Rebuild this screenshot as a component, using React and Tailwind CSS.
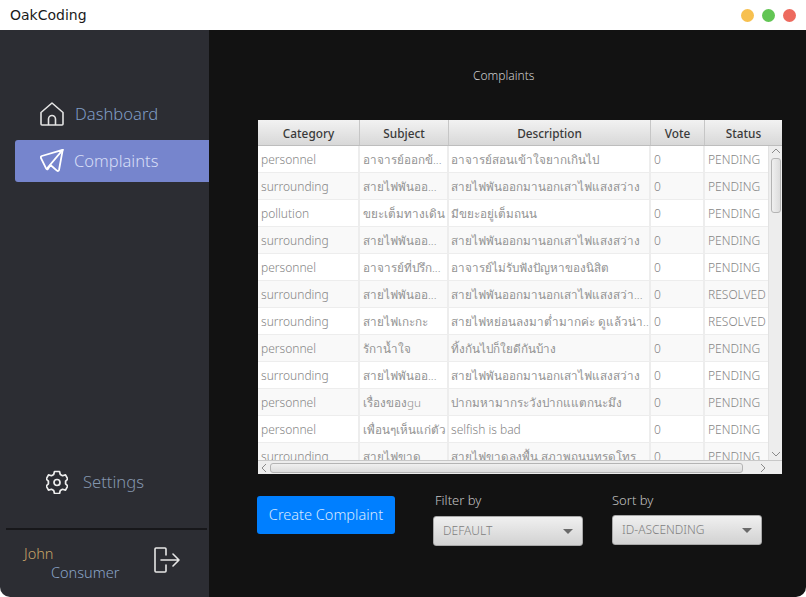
const rows = [
  ["personnel", "อาจารย์ออกข้...", "อาจารย์สอนเข้าใจยากเกินไป", "PENDING"],
  ["surrounding", "สายไฟพันออ...", "สายไฟพันออกมานอกเสาไฟแสงสว่าง", "PENDING"],
  ["pollution", "ขยะเต็มทางเดิน", "มีขยะอยู่เต็มถนน", "PENDING"],
  ["surrounding", "สายไฟพันออ...", "สายไฟพันออกมานอกเสาไฟแสงสว่าง", "PENDING"],
  ["personnel", "อาจารย์ที่ปรึก...", "อาจารย์ไม่รับฟังปัญหาของนิสิต", "PENDING"],
  ["surrounding", "สายไฟพันออ...", "สายไฟพันออกมานอกเสาไฟแสงสว่า...", "RESOLVED"],
  ["surrounding", "สายไฟเกะกะ", "สายไฟหย่อนลงมาต่ำมากค่ะ ดูแล้วน่า...", "RESOLVED"],
  ["personnel", "รักาน้ำใจ", "ทิ้งกันไปก็ใยดีกันบ้าง", "PENDING"],
  ["surrounding", "สายไฟพันออ...", "สายไฟพันออกมานอกเสาไฟแสงสว่าง", "PENDING"],
  ["personnel", "เรื่องของgu", "ปากมหามากระวังปากแแตกนะมึง", "PENDING"],
  ["personnel", "เพื่อนๆเห็นแก่ตัว", "selfish is bad", "PENDING"],
  ["surrounding", "สายไฟขาด", "สายไฟขาดลงพื้น สภาพถนนทรุดโทร", "PENDING"],
];

const headers = [
  ["Category", "w-[102px]"],
  ["Subject", "w-[89px]"],
  ["Description", "w-[202px]"],
  ["Vote", "w-[54px]"],
  ["Status", "w-[77px]"],
];

// the fallback Thai face runs wider than latin, so it gets a smaller size
const textCls = (t) => (/[\u0E00-\u0E7F]/.test(t) ? "text-[11.7px] text-[#929292]" : "text-[12px] text-[#858585]");

const HomeIcon = () => (
  <svg width="24" height="24" viewBox="0 0 24 24" fill="none" stroke="#e4e4e4" strokeWidth="1.6" strokeLinejoin="round">
    <path d="M1 10.5 12 1l11 9.5V22a1 1 0 0 1-1 1H2a1 1 0 0 1-1-1z" />
    <path d="M8.5 23v-6a3.5 3.5 0 0 1 7 0v6" />
  </svg>
);

const PlaneIcon = () => (
  <svg width="24" height="24" viewBox="0 0 24 24" fill="none" stroke="#fff" strokeWidth="1.8" strokeLinejoin="round" strokeLinecap="round">
    <path d="M22.7.8 1.8 7Q.4 7.6 1 9.2L6.2 19.6Q7 21 8 19.8L10.5 16l6.4 5.6Q18.4 22.6 19 21z" />
    <path d="M22.7.8 7 19.5" />
  </svg>
);

const GearIcon = () => (
  <svg width="22" height="24" viewBox="0 0 22 24" fill="none" stroke="#eee" strokeWidth="1.7" strokeLinejoin="round">
    <path d="M8.5 1.5h5l.8 3 2.2 1.2 3-.8 2.3 4.2-2.2 2.1v2.6l2.2 2.1-2.3 4.2-3-.8-2.2 1.2-.8 3h-5l-.8-3-2.2-1.2-3 .8L.2 15.9l2.2-2.1v-2.6L.2 9.1l2.3-4.2 3 .8 2.2-1.2z" />
    <circle cx="11" cy="12.5" r="3" />
  </svg>
);

const LogoutIcon = () => (
  <svg className="-mt-[6px]" width="26" height="26" viewBox="0 0 26 26" fill="none" stroke="#e6e6e6" strokeWidth="1.6" strokeLinecap="round" strokeLinejoin="round">
    <path d="M12 8V2a1 1 0 0 0-1-1H2a1 1 0 0 0-1 1v22a1 1 0 0 0 1 1h9a1 1 0 0 0 1-1v-6" />
    <path d="M7 13h18M19 7l6 6-6 6" />
  </svg>
);

const SelectBox = ({ label, value, className, labelCls, boxCls }) => (
  <div className={`flex flex-col w-[150px] ${className}`}>
    <span className={`text-[13px] leading-[18px] text-[#c4c4c4] ${labelCls}`}>{label}</span>
    <div className={`h-[30px] flex items-center justify-between pl-[9px] pr-[9px] rounded-[3px] border border-[#a8a8a8] bg-gradient-to-b from-[#f0f0f0] to-[#d2d2d2] text-[12px] text-[#808080] ${boxCls}`}>
      <span>{value}</span>
      <span className="w-0 h-0 border-x-[5px] border-x-transparent border-t-[5px] border-t-[#6a6a6a]" />
    </div>
  </div>
);

export default function App() {
  return (
    <div className="w-[806px] h-[597px] flex flex-col bg-white overflow-hidden font-['Noto_Sans',sans-serif] font-light">
      {/* Title bar */}
      <div className="h-[30px] shrink-0 flex items-center justify-between pl-[10px] pr-[10px] bg-white">
        <span className="font-['DejaVu_Sans',sans-serif] font-normal text-[14px] text-[#1a1a1a]">OakCoding</span>
        <div className="flex items-center gap-[8px]">
          <span className="w-[13px] h-[13px] rounded-full bg-[#f7c04f]" />
          <span className="w-[13px] h-[13px] rounded-full bg-[#62c554]" />
          <span className="w-[13px] h-[13px] rounded-full bg-[#ed6a5e]" />
        </div>
      </div>

      <div className="flex-1 flex min-h-0 rounded-b-[10px] overflow-hidden">
        {/* Sidebar */}
        <div className="w-[209px] shrink-0 bg-[#2c2d33] flex flex-col pt-[64px]">
          <div className="h-[40px] flex items-center pl-[40px] gap-[11px] text-[16.6px] text-[#7f9cc4]">
            <HomeIcon />
            <span>Dashboard</span>
          </div>
          <div className="mt-[6px] ml-[15px] h-[42px] flex items-center pl-[25px] gap-[10px] rounded-l-[3px] bg-[#7685cd] text-[16.5px] text-[#d6def6]">
            <PlaneIcon />
            <span>Complaints</span>
          </div>
          <div className="mt-auto h-[40px] flex items-center pl-[46px] gap-[15px] text-[16.6px] text-[#8496ae]">
            <GearIcon />
            <span>Settings</span>
          </div>
          <div className="mt-[26px] ml-[6px] mr-[2px] border-t-2 border-[#17171a]" />
          <div className="h-[67px] flex items-center pl-[24px] pb-[2px]">
            <div className="w-[130px] text-[14.5px] leading-[19px]">
              <div className="text-[#c7a468]">John</div>
              <div className="pl-[27px] text-[#8aa4c8]">Consumer</div>
            </div>
            <LogoutIcon />
          </div>
        </div>

        {/* Main */}
        <div className="flex-1 bg-[#121212] flex flex-col pl-[49px] pr-[24px]">
          <div className="h-[90px] pt-[36px] pl-[215px] text-[12px] leading-[20px] text-[#cfcfcf]">Complaints</div>

          {/* Table */}
          <div className="w-[524px] h-[354px] bg-[#f4f4f4] flex flex-col overflow-hidden">
            <div className="h-[26px] shrink-0 flex border-b border-[#bdbdbd] bg-gradient-to-b from-[#f2f2f2] to-[#d8d8d8]">
              {headers.map(([h, w]) => (
                <div key={h} className={`${w} shrink-0 flex items-center justify-center pt-[3px] border-r border-[#c6c6c6] last:border-r-0 font-medium text-[#3a3a3a] text-[11.8px]`}>
                  {h}
                </div>
              ))}
            </div>
            <div className="flex-1 min-h-0 flex">
              <div className="w-[510px] overflow-hidden">
                {rows.map((r, i) => (
                  <div key={i} className={`h-[27px] flex items-center border-b border-[#ededed] ${i % 2 ? "bg-[#f9f9f9]" : "bg-white"}`}>
                    <div className={`w-[102px] shrink-0 pl-[3px] pt-px border-r-2 border-[#ededed] h-full flex items-center whitespace-nowrap overflow-hidden ${textCls(r[0])}`}>{r[0]}</div>
                    <div className={`w-[89px] shrink-0 pl-[3px] pt-px border-r-2 border-[#ededed] h-full flex items-center whitespace-nowrap overflow-hidden ${textCls(r[1])}`}>{r[1]}</div>
                    <div className={`w-[202px] shrink-0 pl-[2px] pt-px border-r-2 border-[#ededed] h-full flex items-center whitespace-nowrap overflow-hidden ${textCls(r[2])}`}>{r[2]}</div>
                    <div className="w-[54px] shrink-0 pl-[3px] pt-px border-r-2 border-[#ededed] h-full flex items-center text-[12px] text-[#858585]">0</div>
                    <div className="w-[63px] shrink-0 pl-[3px] pt-px h-full flex items-center whitespace-nowrap overflow-hidden text-[12px] text-[#858585]">{r[3]}</div>
                  </div>
                ))}
              </div>
              {/* Vertical scrollbar */}
              <div className="w-[14px] shrink-0 flex flex-col items-center bg-[#ededed] border-l border-[#e2e2e2]">
                <svg width="10" height="12" viewBox="0 0 10 12" fill="none" stroke="#8a8a8a" strokeWidth="1"><path d="M1 7l4-4 4 4" /></svg>
                <div className="w-[10px] h-[55px] rounded-[3px] border border-[#b4b4b4] bg-gradient-to-r from-[#f0f0f0] to-[#dcdcdc]" />
                <div className="flex-1" />
                <svg width="10" height="12" viewBox="0 0 10 12" fill="none" stroke="#8a8a8a" strokeWidth="1"><path d="M1 4l4 4 4-4" /></svg>
              </div>
            </div>
            {/* Horizontal scrollbar */}
            <div className="h-[14px] shrink-0 flex items-center bg-[#ededed] border-t border-[#c8c8c8]">
              <svg width="12" height="10" viewBox="0 0 12 10" fill="none" stroke="#8a8a8a" strokeWidth="1"><path d="M8 1 4 5l4 4" /></svg>
              <div className="w-[473px] h-[10px] rounded-[3px] border border-[#b4b4b4] bg-gradient-to-b from-[#f0f0f0] to-[#dcdcdc]" />
              <svg className="ml-[14px]" width="12" height="10" viewBox="0 0 12 10" fill="none" stroke="#8a8a8a" strokeWidth="1"><path d="M4 1l4 4-4 4" /></svg>
            </div>
          </div>

          {/* Bottom controls */}
          <div className="flex items-start mt-[17px]">
            <button className="mt-[5px] -ml-[1px] w-[138px] h-[38px] rounded-[3px] bg-[#007fff] text-[#d8e9ff] text-[14.5px] font-light">Create Complaint</button>
            <SelectBox label="Filter by" value="DEFAULT" className="ml-[38px]" labelCls="ml-[2px]" boxCls="mt-[7px]" />
            <SelectBox label="Sort by" value="ID-ASCENDING" className="ml-[29px]" labelCls="" boxCls="mt-[6px]" />
          </div>
        </div>
      </div>
    </div>
  );
}
